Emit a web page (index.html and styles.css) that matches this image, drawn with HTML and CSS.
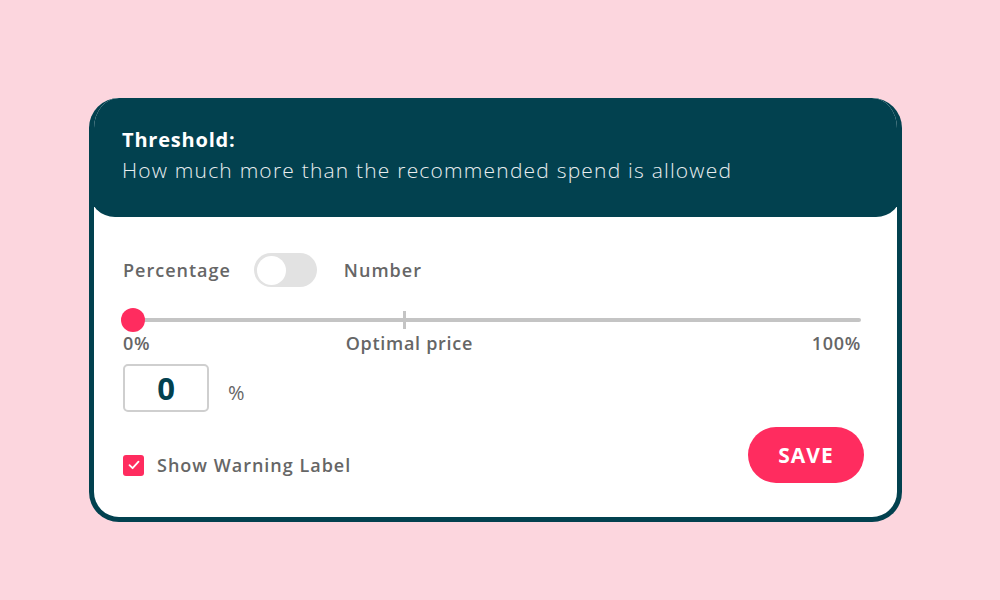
FILE: index.html
```html
<!DOCTYPE html>
<html>
<head>
<meta charset="utf-8">
<link rel="stylesheet" href="styles.css">
</head>
<body>
<div class="page">
  <div class="card">
    <div class="header">
      <div class="title">Threshold:</div>
      <div class="subtitle">How much more than the recommended spend is allowed</div>
    </div>
    <div class="content">
      <div class="toggle-row">
        <span class="opt">Percentage</span>
        <span class="switch"><span class="knob"></span></span>
        <span class="opt">Number</span>
      </div>
      <div class="slider">
        <div class="track">
          <span class="tick" style="left: 37.2%"></span>
          <span class="thumb"></span>
        </div>
      </div>
      <div class="scale">
        <span>0%</span>
        <span class="optimal" style="left: 38.8%">Optimal price</span>
        <span>100%</span>
      </div>
      <div class="value-row">
        <div class="value-box">0</div>
        <span class="unit">%</span>
      </div>
      <div class="bottom-row">
        <label class="check">
          <span class="box">
            <svg width="14" height="14" viewBox="0 0 14 14"><path d="M2.5 7.2 L5.6 10.2 L11.5 3.6" fill="none" stroke="#fff" stroke-width="1.8" stroke-linecap="round" stroke-linejoin="round"/></svg>
          </span>
          <span class="check-label">Show Warning Label</span>
        </label>
        <button class="save">SAVE</button>
      </div>
    </div>
  </div>
</div>
</body>
</html>
```

FILE: styles.css
```css
* { box-sizing: border-box; }
html, body {
  margin: 0;
  padding: 0;
  width: 1000px;
  height: 600px;
  background: #fcd6de;
  font-family: "Open Sans", "Lato", sans-serif;
  overflow: hidden;
}
.page {
  padding: 98px 0 0 89px;
}
.card {
  width: 813px;
  height: 424px;
  border: 5px solid #02414f;
  border-top: 0;
  border-radius: 30px;
  background: #fff;
  overflow: hidden;
  display: flex;
  flex-direction: column;
}
.header {
  background: #02414f;
  margin: 0 -5px;
  height: 119px;
  border-radius: 30px 30px 26px 26px;
  padding: 27px 0 0 33px;
  color: #fff;
}
.title {
  font-size: 20px;
  font-weight: 700;
  line-height: 30px;
  letter-spacing: 0.8px;
}
.subtitle {
  font-size: 21px;
  font-weight: 300;
  line-height: 30px;
  letter-spacing: 1.2px;
  color: #e9eef0;
}
.content {
  padding: 36px 36px 0 29px;
  display: flex;
  flex-direction: column;
  color: #666;
}
.toggle-row {
  display: flex;
  align-items: center;
  height: 34px;
}
.opt {
  font-size: 18px;
  font-weight: 600;
  letter-spacing: 1px;
}
.switch {
  width: 63px;
  height: 34px;
  border-radius: 17px;
  background: #e2e2e2;
  margin: 0 27px 0 23px;
  padding: 3px;
  display: flex;
  align-items: center;
}
.knob {
  width: 29px;
  height: 29px;
  border-radius: 50%;
  background: #fff;
}
.slider {
  margin-top: 21px;
  height: 24px;
  display: flex;
  align-items: center;
  padding-left: 10px;
}
.track {
  position: relative;
  flex: 1;
  height: 4px;
  border-radius: 2px;
  background: #c4c4c4;
}
.tick {
  position: absolute;
  top: -7px;
  width: 3px;
  height: 18px;
  margin-left: -1px;
  background: #c4c4c4;
}
.thumb {
  position: absolute;
  left: -12px;
  top: -10px;
  width: 24px;
  height: 24px;
  border-radius: 50%;
  background: #ff2c5f;
}
.scale {
  position: relative;
  display: flex;
  justify-content: space-between;
  font-size: 18px;
  font-weight: 600;
  line-height: 20px;
  margin-top: 1px;
  letter-spacing: 0.7px;
}
.optimal {
  position: absolute;
  top: 0;
  transform: translateX(-50%);
}
.value-row {
  display: flex;
  align-items: center;
  margin-top: 11px;
}
.value-box {
  width: 86px;
  height: 48px;
  border: 2px solid #cfcfcf;
  border-radius: 5px;
  display: flex;
  align-items: center;
  justify-content: center;
  font-size: 31px;
  font-weight: 700;
  color: #02414f;
}
.unit {
  margin-left: 19px;
  font-size: 20px;
  margin-top: 8px;
}
.bottom-row {
  display: flex;
  align-items: center;
  justify-content: space-between;
  margin-top: 15px;
  margin-right: -3px;
}
.check {
  display: flex;
  align-items: center;
  margin-top: 20px;
}
.box {
  width: 21px;
  height: 21px;
  border-radius: 3px;
  background: #ff2c5f;
  display: flex;
  align-items: center;
  justify-content: center;
}
.check-label {
  margin-left: 13px;
  font-size: 18px;
  font-weight: 600;
  letter-spacing: 1px;
}
.save {
  width: 116px;
  height: 56px;
  border: 0;
  border-radius: 28px;
  background: #ff2c5f;
  color: #fff;
  font-family: "Open Sans", sans-serif;
  font-size: 21px;
  font-weight: 700;
  letter-spacing: 1px;
  padding: 0;
}
```
